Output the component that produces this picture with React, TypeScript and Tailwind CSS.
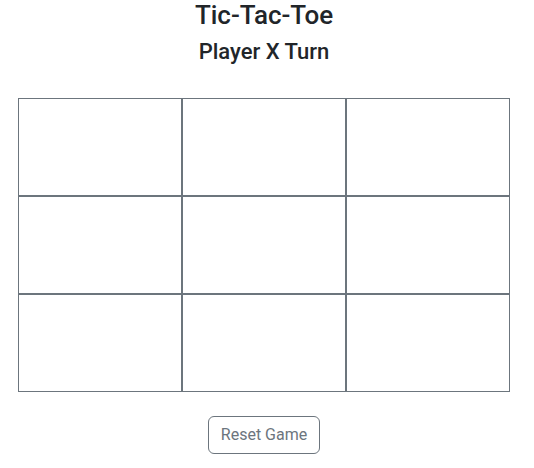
import React, { useState } from "react";

export default function App() {
  const [board, setBoard] = useState<(string | null)[]>(Array(9).fill(null));
  const [xTurn, setXTurn] = useState(true);

  const click = (i: number) => {
    if (board[i]) return;
    const b = board.slice();
    b[i] = xTurn ? "X" : "O";
    setBoard(b);
    setXTurn(!xTurn);
  };

  return (
    <div className="w-[528px] flex flex-col items-center text-[#212529] font-['Roboto','Liberation_Sans',sans-serif]">
      <h1 className="text-[26px] leading-[31px] font-medium mb-2">Tic-Tac-Toe</h1>
      <h3 className="text-[22px] leading-[26px] font-medium">Player {xTurn ? "X" : "O"} Turn</h3>
      <div className="grid grid-cols-3 w-[492px] mt-[33px]">
        {board.map((v, i) => (
          <div
            key={i}
            onClick={() => click(i)}
            className="h-[98px] border border-[#6c757d] flex items-center justify-center text-4xl cursor-pointer"
          >
            {v}
          </div>
        ))}
      </div>
      <button
        onClick={() => {
          setBoard(Array(9).fill(null));
          setXTurn(true);
        }}
        className="mt-6 px-3 py-[6px] text-base leading-6 text-[#6c757d] border border-[#6c757d] rounded-md"
      >
        Reset Game
      </button>
    </div>
  );
}
